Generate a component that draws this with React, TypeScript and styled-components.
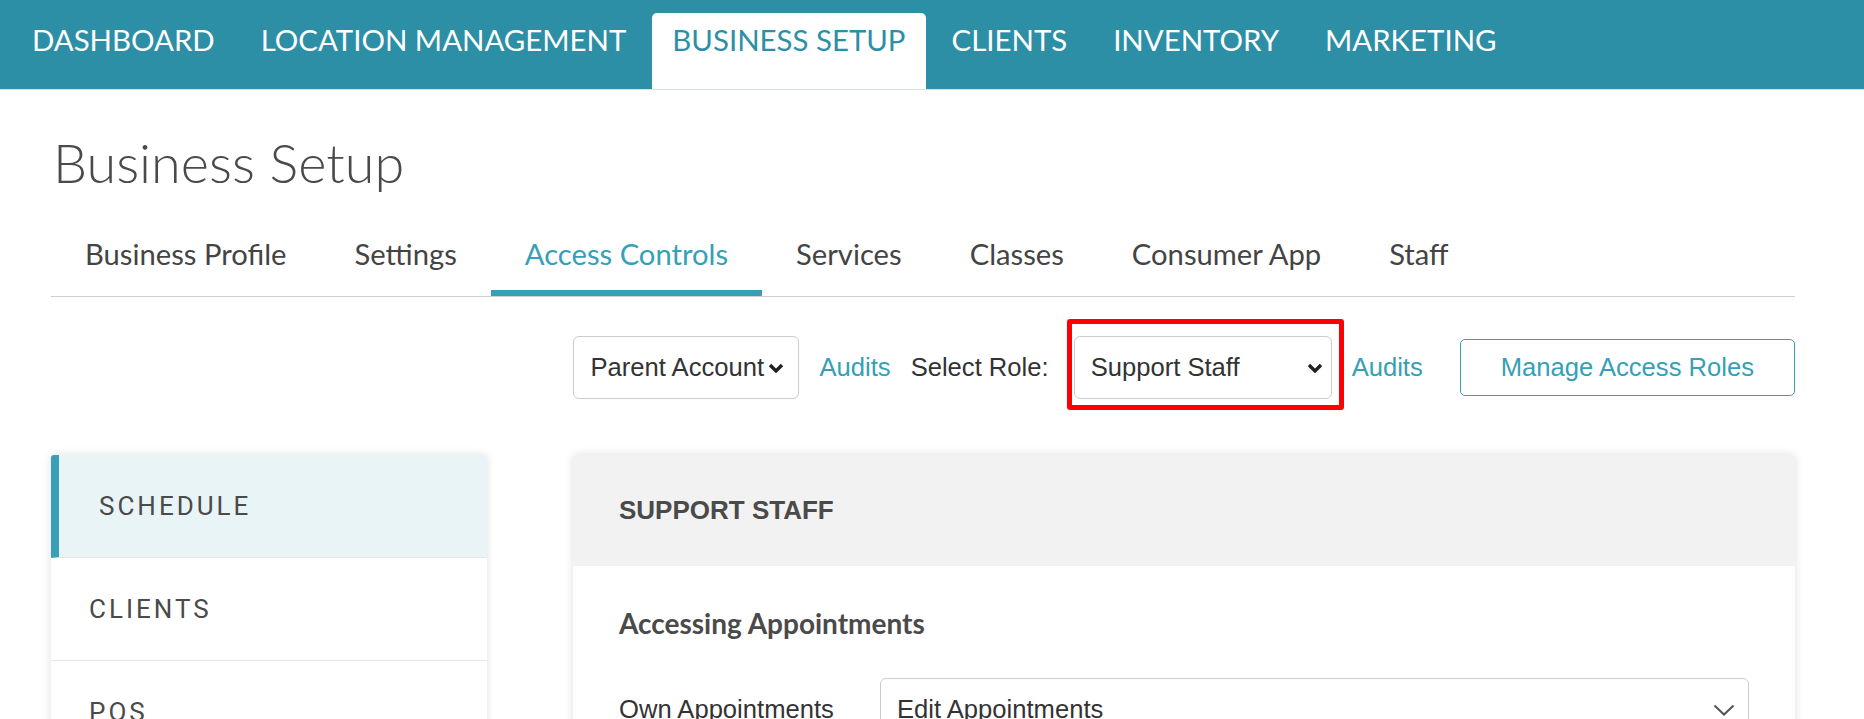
import React from "react";
import styled, { createGlobalStyle } from "styled-components";

const teal = "#2d8fa5";
const accent = "#35a0b6";
const text = "#4a4a4a";

const GlobalStyle = createGlobalStyle`
  * { box-sizing: border-box; }
  body {
    margin: 0;
    background: #fff;
    font-family: "Liberation Sans", Arial, sans-serif;
    color: #333;
  }
`;

const TopNav = styled.nav`
  height: 90px;
  background: ${teal};
  display: flex;
  align-items: flex-end;
  gap: 6px;
  padding-left: 12px;
  border-bottom: 1px solid #d7e2e5;
`;

const NavItem = styled.a<{ $active?: boolean }>`
  height: 76px;
  padding: 5px 20px 0;
  line-height: 44px;
  font-family: Lato, "Open Sans", sans-serif;
  font-size: 29.4px;
  text-transform: uppercase;
  white-space: nowrap;
  color: ${({ $active }) => ($active ? teal : "#fff")};
  background: ${({ $active }) => ($active ? "#fff" : "transparent")};
  border-radius: 5px 5px 0 0;
`;

const Page = styled.main`
  padding: 0 69px 0 51px;
`;

const Title = styled.h1`
  margin: 38px 0 0 2px;
  font-family: Lato, "Open Sans", sans-serif;
  font-weight: 300;
  font-size: 54px;
  line-height: 70px;
  color: ${text};
`;

const Tabs = styled.div`
  margin-top: 28px;
  display: flex;
  border-bottom: 1px solid #cfcfcf;
`;

const Tab = styled.div<{ $active?: boolean }>`
  height: 70px;
  padding: 0 34px 10px;
  display: flex;
  align-items: center;
  font-family: Lato, "Open Sans", sans-serif;
  font-size: 29.2px;
  color: ${({ $active }) => ($active ? accent : "#444")};
  border-bottom: 6px solid ${({ $active }) => ($active ? accent : "transparent")};
`;

const Toolbar = styled.div`
  margin-top: 39px;
  height: 63px;
  display: flex;
  justify-content: flex-end;
  align-items: center;
  gap: 20px;
  font-size: 25.6px;
`;

const SelectBox = styled.div<{ $width?: number; $padRight?: number }>`
  position: relative;
  width: ${({ $width }) => ($width ? `${$width}px` : "auto")};
  height: 63px;
  display: flex;
  align-items: center;
  padding: 0 ${({ $padRight }) => $padRight ?? 12}px 0 16px;
  border: 1px solid #cccccc;
  border-radius: 6px;
  background: #fff;
  color: #333;
  font-size: 25.6px;
`;

const SelectText = styled.span`
  flex: 1;
  white-space: nowrap;
  overflow: hidden;
`;

const Highlight = styled.span`
  position: absolute;
  top: -18px;
  bottom: -12px;
  left: -8px;
  right: -13px;
  border: 5px solid #ff0000;
  border-radius: 3px;
  pointer-events: none;
`;

const Link = styled.a`
  color: ${accent};
  white-space: nowrap;
`;

const Label = styled.span`
  color: #333;
  white-space: nowrap;
`;

const OutlineButton = styled.button`
  margin-left: 17px;
  height: 57px;
  padding: 0 40px;
  border: 1px solid ${accent};
  border-radius: 5px;
  background: #fff;
  color: ${accent};
  font-family: "Liberation Sans", Arial, sans-serif;
  font-size: 25.6px;
`;

const Columns = styled.div`
  margin-top: 56px;
  display: flex;
  align-items: flex-start;
  gap: 86px;
`;

const SideMenu = styled.ul`
  list-style: none;
  margin: 0;
  padding: 0;
  width: 436px;
  flex: none;
  background: #fff;
  border-radius: 3px;
  box-shadow: 0 0 10px rgba(0, 0, 0, 0.13);
  overflow: hidden;
`;

const SideItem = styled.li<{ $active?: boolean }>`
  height: 103px;
  display: flex;
  align-items: center;
  padding-left: ${({ $active }) => ($active ? 40 : 38)}px;
  border-left: ${({ $active }) => ($active ? `8px solid ${accent}` : "none")};
  border-bottom: 1px solid #e4e6e7;
  background: ${({ $active }) => ($active ? "#e9f4f6" : "#fff")};
  font-family: Roboto, "Liberation Sans", sans-serif;
  font-size: 26px;
  letter-spacing: 3px;
  color: ${text};
`;

const Card = styled.section`
  flex: 1;
  background: #fff;
  border-radius: 3px;
  box-shadow: 0 0 10px rgba(0, 0, 0, 0.13);
  overflow: hidden;
`;

const CardHeader = styled.header`
  height: 111px;
  display: flex;
  align-items: center;
  padding: 0 46px;
  background: #f2f2f2;
  font-weight: bold;
  font-size: 26px;
  color: ${text};
`;

const CardBody = styled.div`
  padding: 41px 46px 40px;
`;

const SectionTitle = styled.h3`
  margin: 0;
  font-family: Lato, "Open Sans", sans-serif;
  font-weight: 700;
  font-size: 28px;
  line-height: 32px;
  color: ${text};
`;

const FieldRow = styled.div`
  margin-top: 39px;
  display: grid;
  grid-template-columns: 261px 1fr;
  align-items: center;
`;

const FieldLabel = styled.span`
  font-size: 25.6px;
  color: #333;
`;

const Chevron = ({ thin }: { thin?: boolean }) =>
  thin ? (
    <svg width="22" height="12" viewBox="0 0 22 12" fill="none">
      <path d="M1.5 1.5 L11 10.5 L20.5 1.5" stroke="#555" strokeWidth="2" />
    </svg>
  ) : (
    <svg width="16" height="10" viewBox="0 0 16 10" fill="none">
      <path d="M2 2 L8 8 L14 2" stroke="#222" strokeWidth="3.4" />
    </svg>
  );

const navItems = [
  "Dashboard",
  "Location Management",
  "Business Setup",
  "Clients",
  "Inventory",
  "Marketing",
];

const tabs = [
  "Business Profile",
  "Settings",
  "Access Controls",
  "Services",
  "Classes",
  "Consumer App",
  "Staff",
];

const menu = ["Schedule", "Clients", "POS", "Inventory"];

export default function App() {
  return (
    <>
      <GlobalStyle />
      <TopNav>
        {navItems.map((n) => (
          <NavItem key={n} $active={n === "Business Setup"}>
            {n}
          </NavItem>
        ))}
      </TopNav>
      <Page>
        <Title>Business Setup</Title>
        <Tabs>
          {tabs.map((t) => (
            <Tab key={t} $active={t === "Access Controls"}>
              {t}
            </Tab>
          ))}
        </Tabs>

        <Toolbar>
          <SelectBox $width={226} $padRight={14}>
            <SelectText>Parent Account</SelectText>
            <Chevron />
          </SelectBox>
          <Link>Audits</Link>
          <Label>Select Role:</Label>
          <SelectBox $width={258} $padRight={8} style={{ marginLeft: 5 }}>
            <SelectText>Support Staff</SelectText>
            <Chevron />
            <Highlight />
          </SelectBox>
          <Link>Audits</Link>
          <OutlineButton>Manage Access Roles</OutlineButton>
        </Toolbar>

        <Columns>
          <SideMenu>
            {menu.map((m) => (
              <SideItem key={m} $active={m === "Schedule"}>
                {m.toUpperCase()}
              </SideItem>
            ))}
          </SideMenu>
          <Card>
            <CardHeader>SUPPORT STAFF</CardHeader>
            <CardBody>
              <SectionTitle>Accessing Appointments</SectionTitle>
              <FieldRow>
                <FieldLabel>Own Appointments</FieldLabel>
                <SelectBox $padRight={13}>
                  <SelectText>Edit Appointments</SelectText>
                  <Chevron thin />
                </SelectBox>
              </FieldRow>
            </CardBody>
          </Card>
        </Columns>
      </Page>
    </>
  );
}
